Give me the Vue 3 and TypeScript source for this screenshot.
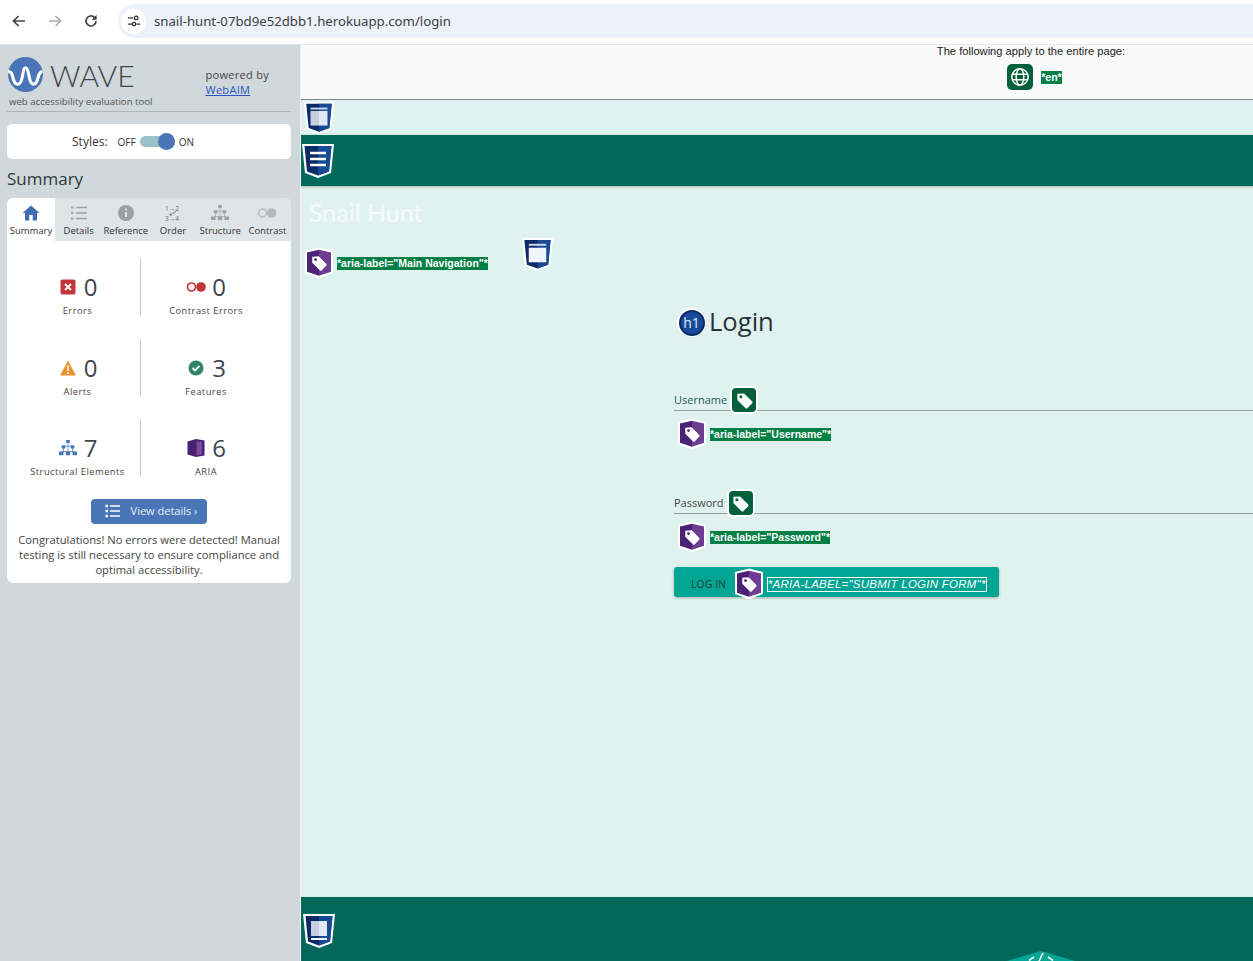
<template>
  <div class="window">
    <svg class="defs" width="0" height="0" aria-hidden="true">
      <defs>
        <symbol id="tag-shape" viewBox="0 0 24 24">
          <path d="M3 3.500 11.500 3 21.500 13a2 2 0 0 1 0 2.800L15.800 21.500a2 2 0 0 1-2.800 0L3 11.500Z" fill="#fff" />
          <circle cx="7.400" cy="7.400" r="1.900" fill="currentColor" />
        </symbol>
        <symbol id="shield-frame" viewBox="0 0 34 36">
          <path d="M1 1H33L30 30 17 35 4 30Z" fill="#fff" />
          <path d="M3.500 3H30.500L28 28.500 17 32.500 6 28.500Z" fill="#0b2a66" />
          <path d="M17 3H30.500L28 28.500 17 32.500Z" fill="#174a94" />
        </symbol>
        <symbol id="aria-tag" viewBox="0 0 30 32">
          <path d="M1 4 15 .5 29 4V26L15 31.500 1 26Z" fill="#fff" />
          <path d="M3 5.500 15 2.800V28.800L3 24.800Z" fill="#4a2173" />
          <path d="M15 2.800 27 5.500V24.800L15 28.800Z" fill="#6d3d92" />
          <use href="#tag-shape" x="6" y="7" width="18" height="18" color="#4a2173" />
        </symbol>
        <symbol id="structure-tree" viewBox="0 0 20 18">
          <path d="M10 3V7M5 7H15M5 7V13M15 7V13M10 7V13M2.500 13H17.500" fill="none" stroke="currentColor" stroke-width=".8" />
          <path d="M8 0H12V3.500H8ZM3 6H7V9.500H3ZM13 6H17V9.500H13ZM0 13H5V17H0ZM7.500 13H12.500V17H7.500ZM15 13H20V17H15Z" fill="currentColor" />
        </symbol>
      </defs>
    </svg>

    <header class="browser-bar">
      <svg class="nav-icon" viewBox="0 0 16 16"><path d="M14 8H3M7.500 3 2.500 8l5 5" fill="none" stroke="#444" stroke-width="1.700" /></svg>
      <svg class="nav-icon" viewBox="0 0 16 16"><path d="M2 8h11M8.500 3l5 5-5 5" fill="none" stroke="#aaa" stroke-width="1.700" /></svg>
      <svg class="nav-icon" viewBox="0 0 16 16"><path d="M13 8a5 5 0 1 1-1.600-3.700L13 6" fill="none" stroke="#444" stroke-width="1.700" /><path d="M13.600 1.800v5h-5Z" fill="#444" /></svg>
      <div class="address">
        <span class="site-info">
          <svg viewBox="0 0 16 16" width="14" height="14"><path d="M1 4.500h6M11 11.500h4M1 11.500h5" stroke="#333" stroke-width="1.500" fill="none" /><circle cx="10.500" cy="4.500" r="2" fill="none" stroke="#333" stroke-width="1.500" /><circle cx="8" cy="11.500" r="2" fill="none" stroke="#333" stroke-width="1.500" /></svg>
        </span>
        <span class="url">snail-hunt-07bd9e52dbb1.herokuapp.com/login</span>
      </div>
    </header>

    <div class="layout">
      <aside class="wave">
        <div class="brand">
          <div class="brand-main">
            <div class="logo-row">
              <svg class="logo" viewBox="0 0 36 36">
                <circle cx="18" cy="18" r="18" fill="#4a76b8" />
                <path d="M0 15c3 0 4 1 5 6s2.500 7 5 7 4-3 5-9 1.500-8 3-8 2.500 2 3.500 8 2.500 9 5 9 3.500-3 4.500-7 2-6 4.500-6" fill="none" stroke="#fff" stroke-width="3.200" />
              </svg>
              <span class="wordmark">WAVE</span>
            </div>
            <div class="tagline">web accessibility evaluation tool</div>
          </div>
          <div class="powered">powered by<br /><a href="#">WebAIM</a></div>
        </div>

        <div class="styles-card">
          <span class="styles-label">Styles:</span>
          <span class="switch-text">OFF</span>
          <span class="switch"><span class="knob"></span></span>
          <span class="switch-text">ON</span>
        </div>

        <h2 class="summary-title">Summary</h2>

        <div class="panel">
          <nav class="tabs">
            <div v-for="tab in tabs" :key="tab.label" class="tab" :class="{ active: tab.active }">
              <svg class="tab-icon" viewBox="0 0 20 16">
                <template v-if="tab.label === 'Summary'">
                  <path d="M10 .5 18.500 8H16v7.500h-4.300V10H8.300v5.500H4V8H1.500Z" fill="#3f6eb0" />
                </template>
                <template v-else-if="tab.label === 'Details'">
                  <path d="M7 2.500h11M7 8h11M7 13.500h11" stroke="#9aa3a8" stroke-width="1.600" />
                  <path d="M2 2.500h2.500M2 8h2.500M2 13.500h2.500" stroke="#9aa3a8" stroke-width="2" />
                </template>
                <template v-else-if="tab.label === 'Reference'">
                  <circle cx="10" cy="8" r="8" fill="#9aa1a6" />
                  <path d="M10 7v5M10 3.500v2" stroke="#e0e5e8" stroke-width="2" />
                </template>
                <template v-else-if="tab.label === 'Order'">
                  <text x="2" y="5.500" class="order-digits">1→2</text>
                  <path d="M13 6.500 7 10M7 10h2M7 10V8.500" fill="none" stroke="#666" stroke-width=".8" />
                  <text x="2" y="15.500" class="order-digits">3→4</text>
                </template>
                <template v-else-if="tab.label === 'Structure'">
                  <use href="#structure-tree" x="1" y="0" width="18" height="16" color="#9aa3a8" />
                </template>
                <template v-else>
                  <circle cx="5.500" cy="8" r="4" fill="none" stroke="#b4bbbf" stroke-width="1.500" />
                  <circle cx="14.500" cy="8" r="4.800" fill="#b4bbbf" />
                </template>
              </svg>
              <span>{{ tab.label }}</span>
            </div>
          </nav>

          <div class="stats">
            <div v-for="stat in stats" :key="stat.label" class="stat">
              <div class="stat-value">
                <svg class="stat-icon" viewBox="0 0 20 20">
                  <template v-if="stat.kind === 'error'">
                    <rect x="2.500" y="2.500" width="15" height="15" rx="2" fill="#c4343b" />
                    <path d="M7 7l6 6M13 7l-6 6" stroke="#fff" stroke-width="1.800" />
                  </template>
                  <template v-else-if="stat.kind === 'contrast'">
                    <circle cx="5.500" cy="10" r="4" fill="none" stroke="#c4343b" stroke-width="1.700" />
                    <circle cx="15" cy="10" r="4.800" fill="#c4343b" />
                  </template>
                  <template v-else-if="stat.kind === 'alert'">
                    <path d="M10 2.500 18 17.500H2Z" fill="#e8962e" />
                    <path d="M10 7.500v5.500M10 14v2" stroke="#fff" stroke-width="1.500" />
                  </template>
                  <template v-else-if="stat.kind === 'feature'">
                    <circle cx="10" cy="10" r="7.500" fill="#2f8465" />
                    <path d="M6.500 10l2.500 2.500 4.500-4.500" fill="none" stroke="#fff" stroke-width="1.800" />
                  </template>
                  <template v-else-if="stat.kind === 'structure'">
                    <use href="#structure-tree" x="1" y="1.500" width="18" height="17" color="#4a76b8" />
                  </template>
                  <template v-else>
                    <path d="M1.500 3.500 10 1l8.500 1.500v15L10 19 1.500 16.500Z" fill="#4a2173" />
                    <path d="M10.500 3.500 16 4v12.500l-5.500.5Z" fill="#7b4a9e" />
                  </template>
                </svg>
                <span class="stat-number">{{ stat.value }}</span>
              </div>
              <div class="stat-label">{{ stat.label }}</div>
            </div>
          </div>

          <button class="details-btn" type="button">
            <svg viewBox="0 0 16 14" width="16" height="14"><path d="M5 2h10M5 7h10M5 12h10" stroke="#fff" stroke-width="1.600" /><path d="M.5 2h2.500M.5 7h2.500M.5 12h2.500" stroke="#fff" stroke-width="2.400" /></svg>
            <span>View details ›</span>
          </button>

          <p class="congrats">Congratulations! No errors were detected! Manual testing is still necessary to ensure compliance and optimal accessibility.</p>
        </div>
      </aside>

      <main class="viewport">
        <div class="page">
          <section class="page-notice">
            <p>The following apply to the entire page:</p>
            <div class="notice-row">
              <span class="globe">
                <svg viewBox="0 0 20 20" width="20" height="20"><g fill="none" stroke="#fff" stroke-width="1.500"><circle cx="10" cy="10" r="8.200" /><ellipse cx="10" cy="10" rx="3.800" ry="8.200" /><path d="M2 7.300h16M2 12.700h16" /></g></svg>
              </span>
              <span class="aria-note">*en*</span>
            </div>
          </section>

          <div class="page-top">
            <svg class="shield small" viewBox="0 0 34 36">
              <use href="#shield-frame" />
              <path d="M8 7H26V9H8Z" fill="#cfd8ea" />
              <path d="M8 10.500H17V26H8Z" fill="#c6cee0" />
              <path d="M17 10.500H26V26H17Z" fill="#e1e8f5" />
            </svg>
          </div>

          <div class="green-bar">
            <svg class="shield" viewBox="0 0 34 36">
              <use href="#shield-frame" />
              <path d="M9 10H25M9 16H25M9 22H25" stroke="#fff" stroke-width="2.500" />
            </svg>
          </div>

          <div class="site-title">Snail Hunt</div>

          <div class="nav-row">
            <svg class="aria-icon" viewBox="0 0 30 32"><use href="#aria-tag" /></svg>
            <span class="aria-note">*aria-label="Main Navigation"*</span>
            <svg class="shield nav-landmark" viewBox="0 0 34 36">
              <use href="#shield-frame" />
              <path d="M8 7H26V9H8Z" fill="#cfd8ea" />
              <path d="M8 11H26V26H8Z" fill="#f2f5fb" />
            </svg>
          </div>

          <section class="form">
            <h1><span class="h1-badge"><span>h1</span></span>Login</h1>

            <div v-for="field in fields" :key="field.label" class="field">
              <div class="field-line">
                <label :class="field.tone">{{ field.label }}</label>
                <span class="label-tag"><svg viewBox="0 0 24 24" width="19" height="19"><use href="#tag-shape" color="#00603c" /></svg></span>
              </div>
              <div class="field-note">
                <svg class="aria-icon" viewBox="0 0 30 32"><use href="#aria-tag" /></svg>
                <span class="aria-note">*aria-label="{{ field.label }}"*</span>
              </div>
            </div>

            <button class="login-btn" type="button">
              <span class="login-text">LOG IN</span>
              <svg class="aria-icon" viewBox="0 0 30 32"><use href="#aria-tag" /></svg>
              <span class="btn-note">*ARIA-LABEL="SUBMIT LOGIN FORM"*</span>
            </button>
          </section>

          <footer class="page-footer">
            <svg class="shield" viewBox="0 0 34 36">
              <use href="#shield-frame" />
              <path d="M9 8H17V23H9Z" fill="#c6cee0" />
              <path d="M17 8H25V23H17Z" fill="#e1e8f5" />
              <path d="M9 25H25V27H9Z" fill="#f2f5fb" />
            </svg>
            <svg class="code-fab" viewBox="0 0 68 10" width="68" height="10">
              <path d="M0 10 34 0 68 10Z" fill="#00a593" />
              <path d="M27 6 22 9.500M41 6 46 9.500M36 2 32 10" fill="none" stroke="#fff" stroke-width="1.600" />
            </svg>
          </footer>
        </div>
      </main>
    </div>
  </div>
</template>

<script setup lang="ts">
interface Tab {
  label: string;
  active?: boolean;
}

interface Stat {
  kind: string;
  value: number;
  label: string;
}

const tabs: Tab[] = [
  { label: 'Summary', active: true },
  { label: 'Details' },
  { label: 'Reference' },
  { label: 'Order' },
  { label: 'Structure' },
  { label: 'Contrast' },
];

const stats: Stat[] = [
  { kind: 'error', value: 0, label: 'Errors' },
  { kind: 'contrast', value: 0, label: 'Contrast Errors' },
  { kind: 'alert', value: 0, label: 'Alerts' },
  { kind: 'feature', value: 3, label: 'Features' },
  { kind: 'structure', value: 7, label: 'Structural Elements' },
  { kind: 'aria', value: 6, label: 'ARIA' },
];

const fields = [
  { label: 'Username', tone: 'teal' },
  { label: 'Password', tone: 'grey' },
];
</script>

<style>
html,
body {
  margin: 0;
  overflow: hidden;
}
</style>

<style scoped>
.window {
  width: 1253px;
  height: 961px;
  overflow: hidden;
  display: flex;
  flex-direction: column;
  font-family: "Open Sans", "Liberation Sans", sans-serif;
  background: #fff;
}

.defs {
  position: absolute;
}

.browser-bar {
  height: 45px;
  flex: none;
  box-sizing: border-box;
  padding: 4px 0 6px 11px;
  display: flex;
  align-items: center;
  border-bottom: 1px solid #e4e6ea;
}

.nav-icon {
  width: 16px;
  height: 16px;
  margin-right: 20px;
}

.address {
  margin-left: -1px;
  flex: 1;
  height: 34px;
  border-radius: 17px 0 0 17px;
  background: #edf1f9;
  display: flex;
  align-items: center;
  padding-left: 3px;
}

.site-info {
  width: 25px;
  height: 25px;
  border-radius: 50%;
  background: #fff;
  display: flex;
  align-items: center;
  justify-content: center;
  margin-right: 8px;
}

.url {
  font-family: "Noto Sans", sans-serif;
  font-size: 13.200px;
  color: #3c4043;
}

.layout {
  flex: 1;
  display: flex;
  min-height: 0;
}

.wave {
  width: 301px;
  flex: none;
  box-sizing: border-box;
  padding: 0 9px 0 7px;
  background: #d0d8db;
  border-right: 1px solid #eef1f2;
  color: #333;
}

.brand {
  display: flex;
  justify-content: space-between;
  height: 67px;
  padding: 11px 2px 0 0;
  box-sizing: border-box;
  border-bottom: 1px solid #adb5b8;
}

.logo-row {
  display: flex;
  align-items: center;
  gap: 7px;
  margin-left: 1px;
  height: 36px;
}

.logo {
  width: 35px;
  height: 35px;
}

.wordmark {
  font-family: Lato, sans-serif;
  font-weight: 300;
  font-size: 30px;
  margin-top: 2px;
  color: #444;
}

.tagline {
  font-size: 9.650px;
  color: #555;
  margin: 3px 0 0 2px;
}

.powered {
  padding: 11px 20px 0 0;
  font-size: 11px;
  line-height: 15px;
  letter-spacing: .3px;
  color: #444;
}

.powered a {
  color: #2b54c4;
}

.styles-card {
  height: 35px;
  margin-top: 12px;
  border-radius: 5px;
  background: #fff;
  display: flex;
  align-items: center;
  justify-content: center;
  padding-right: 32px;
}

.styles-label {
  font-size: 12px;
  margin-right: 10px;
}

.switch-text {
  font-size: 10px;
}

.switch {
  width: 35px;
  height: 11px;
  margin: 0 4px;
  border-radius: 6px;
  background: #9cc0c8;
  position: relative;
}

.knob {
  position: absolute;
  right: 0;
  top: -3px;
  width: 17px;
  height: 17px;
  border-radius: 50%;
  background: #4a76b8;
}

.summary-title {
  margin: 8px 0 8px;
  font-size: 17px;
  line-height: 23px;
  font-weight: 400;
  color: #2f3a40;
}

.panel {
  border-radius: 6px;
  background: #fff;
  overflow: hidden;
  height: 385px;
}

.tabs {
  display: flex;
  height: 43px;
  background: #dfe4e7;
}

.tab {
  flex: 1;
  padding-top: 7px;
  box-sizing: border-box;
  display: flex;
  flex-direction: column;
  align-items: center;
  font-size: 9.500px;
  color: #333;
  white-space: nowrap;
}

.tab.active {
  flex: 0 0 48px;
  background: #fff;
}

.tab-icon {
  width: 20px;
  height: 16px;
  margin-bottom: 3px;
}

.order-digits {
  font-size: 6.500px;
  fill: #666;
}

.stats {
  display: grid;
  grid-template-columns: 126px 1fr;
  row-gap: 23.500px;
  padding: 17px 20px 0 8px;
}

.stat {
  height: 57px;
  display: flex;
  flex-direction: column;
  align-items: center;
  padding-top: 14px;
  box-sizing: border-box;
}

.stat:nth-child(odd) {
  border-right: 1px solid #c8ccce;
}

.stat-value {
  display: flex;
  align-items: center;
  gap: 6px;
  height: 30px;
}

.stat-icon {
  width: 20px;
  height: 20px;
}

.stat-number {
  font-size: 24px;
  line-height: 30px;
  font-weight: 400;
  color: #3f4450;
}

.stat-label {
  font-size: 9.300px;
  letter-spacing: .5px;
  color: #444;
  margin-top: 2px;
  white-space: nowrap;
}

.details-btn {
  display: flex;
  align-items: center;
  justify-content: center;
  gap: 10px;
  width: 116px;
  height: 25px;
  margin: 23px auto 0;
  border: 0;
  border-radius: 4px;
  background: #4a76b8;
  color: #e8eef7;
  font: 11px "Open Sans", sans-serif;
  padding: 0 0 2px 4px;
}

.congrats {
  margin: 8px 8px 0;
  text-align: center;
  font-size: 11.200px;
  line-height: 15px;
  color: #444;
}

.viewport {
  flex: 1;
  min-width: 0;
  overflow: hidden;
}

.page {
  width: 1460px;
  height: 916px;
  background: #e0f2ef;
  display: flex;
  flex-direction: column;
}

.page-notice {
  height: 55px;
  flex: none;
  box-sizing: border-box;
  background: #fafafa;
  border-bottom: 1px solid #7f8a88;
  text-align: center;
  font-family: "Liberation Sans", Arial, sans-serif;
  color: #222;
}

.page-notice p {
  margin: 0;
  font-size: 11.150px;
  line-height: 12px;
}

.notice-row {
  display: flex;
  align-items: center;
  justify-content: center;
  margin-top: 7px;
  gap: 8px;
  margin-left: 7px;
}

.globe {
  width: 26px;
  height: 26px;
  border-radius: 5px;
  background: #00603c;
  display: flex;
  align-items: center;
  justify-content: center;
}

.aria-note {
  font-family: "Liberation Sans", Arial, sans-serif;
  font-size: 10.500px;
  font-weight: 700;
  line-height: 13px;
  background: #008045;
  color: #fff;
  white-space: nowrap;
}

.page-top {
  height: 35px;
  flex: none;
  padding: 1px 0 0 1px;
  box-sizing: border-box;
}

.shield {
  width: 34px;
  height: 36px;
  display: block;
}

.shield.small {
  width: 34px;
  height: 34px;
}

.green-bar {
  height: 51px;
  flex: none;
  box-sizing: border-box;
  padding-top: 8px;
  background: #00695c;
  box-shadow: 0 1px 3px rgba(0, 0, 0, .25);
}

.site-title {
  margin: 11px 0 0 8px;
  font-family: Lato, "Open Sans", sans-serif;
  font-size: 25px;
  line-height: 30px;
  color: #f4fbfa;
  flex: none;
}

.nav-row {
  display: flex;
  align-items: center;
  height: 42px;
  margin-top: 15px;
  padding-left: 3px;
  flex: none;
}

.aria-icon {
  width: 30px;
  height: 32px;
  flex: none;
}

.nav-row .aria-note {
  margin-left: 3px;
}

.nav-landmark {
  width: 33px;
  height: 35px;
  margin: -18px 0 0 33px;
}

.form {
  width: 714px;
  margin-left: 373px;
  flex: 1;
}

h1 {
  margin: 18px 0 0 3px;
  height: 38px;
  display: flex;
  align-items: center;
  font-family: "Open Sans", sans-serif;
  font-size: 25.600px;
  font-weight: 400;
  color: #263238;
}

.h1-badge {
  width: 29px;
  height: 29px;
  border-radius: 50%;
  background: #fff;
  display: flex;
  align-items: center;
  justify-content: center;
  margin: 3px 3px 0 0;
}

.h1-badge span {
  width: 26px;
  height: 26px;
  border-radius: 50%;
  background: #1a4a9c;
  border: 2px solid #0b2a66;
  box-sizing: border-box;
  color: #e4ecf8;
  font-size: 14px;
  font-weight: 400;
  line-height: 21px;
  text-align: center;
}

.field {
  margin-top: 47px;
}

.field + .field {
  margin-top: 41px;
}

.field-line {
  height: 23px;
  border-bottom: 1px solid #8fa09c;
  display: flex;
  align-items: flex-start;
  gap: 3px;
}

.field-line label {
  font-size: 11px;
  line-height: 23px;
  margin-top: 1px;
}

.teal {
  color: #1f5f55;
}

.grey {
  color: #444;
}

.label-tag {
  width: 28px;
  height: 28px;
  margin-top: -1px;
  box-sizing: border-box;
  border: 2px solid #fff;
  border-radius: 6px;
  background: #00603c;
  display: flex;
  align-items: center;
  justify-content: center;
}

.field-note {
  display: flex;
  align-items: center;
  padding-left: 3px;
  margin-top: 8px;
  height: 30px;
  gap: 3px;
}

.login-btn {
  display: flex;
  align-items: center;
  box-sizing: border-box;
  width: 325px;
  height: 30px;
  margin-top: 15px;
  padding: 4px 0 0;
  border: 0;
  border-radius: 3px;
  background: #00a593;
  box-shadow: 0 1px 3px rgba(0, 0, 0, .3);
  font-family: "Open Sans", sans-serif;
}

.login-text {
  font-size: 10.500px;
  color: #24403c;
  margin: 0 8px 0 17px;
}

.btn-note {
  margin-left: 3px;
  font-family: "Liberation Sans", Arial, sans-serif;
  font-size: 11.500px;
  font-style: italic;
  line-height: 13px;
  letter-spacing: .25px;
  color: #fff;
  border: 1px solid #fff;
  white-space: nowrap;
}

.page-footer {
  height: 64px;
  flex: none;
  background: #00695c;
  padding: 16px 0 0 1px;
  box-sizing: border-box;
  position: relative;
}

.code-fab {
  position: absolute;
  left: 706px;
  top: 54px;
}
</style>
